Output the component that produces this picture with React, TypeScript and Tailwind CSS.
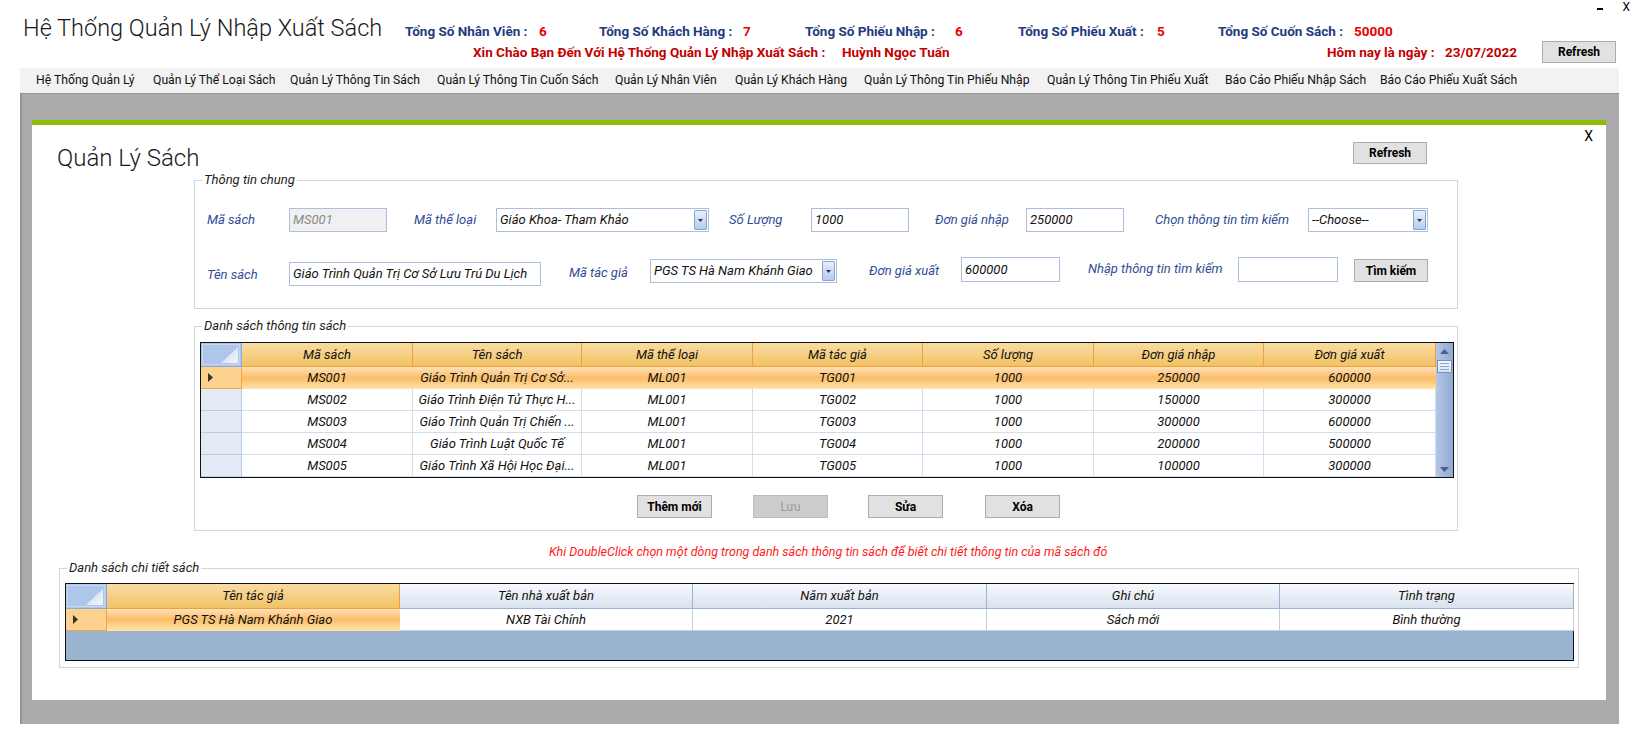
import React from 'react';

const stats = [
  { label: 'Tổng Số Nhân Viên :', value: '6', lw: 'w-[134px]', vw: 'w-[60px]' },
  { label: 'Tổng Số Khách Hàng :', value: '7', lw: 'w-[144px]', vw: 'w-[62px]' },
  { label: 'Tổng Số Phiếu Nhập :', value: '6', lw: 'w-[150px]', vw: 'w-[63px]' },
  { label: 'Tổng Số Phiếu Xuất :', value: '5', lw: 'w-[139px]', vw: 'w-[61px]' },
  { label: 'Tổng Số Cuốn Sách :', value: '50000', lw: 'w-[136px]', vw: 'w-[60px]' },
];

const menuItems = [
  { label: 'Hệ Thống Quản Lý', w: 'w-[117px]' },
  { label: 'Quản Lý Thể Loại Sách', w: 'w-[137px]' },
  { label: 'Quản Lý Thông Tin Sách', w: 'w-[147px]' },
  { label: 'Quản Lý Thông Tin Cuốn Sách', w: 'w-[178px]' },
  { label: 'Quản Lý Nhân Viên', w: 'w-[120px]' },
  { label: 'Quản Lý Khách Hàng', w: 'w-[129px]' },
  { label: 'Quản Lý Thông Tin Phiếu Nhập', w: 'w-[183px]' },
  { label: 'Quản Lý Thông Tin Phiếu Xuất', w: 'w-[178px]' },
  { label: 'Báo Cáo Phiếu Nhập Sách', w: 'w-[155px]' },
  { label: 'Báo Cáo Phiếu Xuất Sách', w: 'w-[140px]' },
];

// bảng sách
const bookCols = [
  { label: 'Mã sách', w: 'w-[171px]' },
  { label: 'Tên sách', w: 'w-[169px]' },
  { label: 'Mã thể loại', w: 'w-[171px]' },
  { label: 'Mã tác giả', w: 'w-[170px]' },
  { label: 'Số lượng', w: 'w-[171px]' },
  { label: 'Đơn giá nhập', w: 'w-[170px]' },
  { label: 'Đơn giá xuất', w: 'w-[172px]' },
];

const books = [
  ['MS001', 'Giáo Trình Quản Trị Cơ Sở...', 'ML001', 'TG001', '1000', '250000', '600000'],
  ['MS002', 'Giáo Trình Điện Tử Thực H...', 'ML001', 'TG002', '1000', '150000', '300000'],
  ['MS003', 'Giáo Trình Quản Trị Chiến ...', 'ML001', 'TG003', '1000', '300000', '600000'],
  ['MS004', 'Giáo Trình Luật Quốc Tế', 'ML001', 'TG004', '1000', '200000', '500000'],
  ['MS005', 'Giáo Trình Xã Hội Học Đại...', 'ML001', 'TG005', '1000', '100000', '300000'],
];

const detailCols = [
  { label: 'Tên tác giả', value: 'PGS TS Hà Nam Khánh Giao', w: 'w-[293px]' },
  { label: 'Tên nhà xuất bản', value: 'NXB Tài Chính', w: 'w-[293px]' },
  { label: 'Năm xuất bản', value: '2021', w: 'w-[294px]' },
  { label: 'Ghi chú', value: 'Sách mới', w: 'w-[293px]' },
  { label: 'Tình trạng', value: 'Bình thường', w: 'w-[294px]' },
];

const DropArrow = () => (
  <div className="flex h-full w-[13px] items-center justify-center rounded-[1px] border border-[#8aa4cc] bg-linear-to-b from-[#e6eefb] to-[#b4cbee]">
    <svg width="5" height="3" viewBox="0 0 5 3">
      <path d="M0 0h5L2.5 3z" fill="#27385a" />
    </svg>
  </div>
);

const TextBox = ({ value, w, h = 'h-[24px]', extra = '', disabled = false }: { value: string; w: string; h?: string; extra?: string; disabled?: boolean }) => (
  <div
    className={`${w} ${h} ${extra} flex shrink-0 items-center overflow-hidden border border-[#abc0dc] px-[3px] text-[13px] whitespace-nowrap italic ${
      disabled ? 'bg-[#f0f0f0] text-[#8a8a8a]' : 'bg-white text-[#111]'
    }`}
  >
    {value}
  </div>
);

const ComboBox = ({ value, w, extra = '' }: { value: string; w: string; extra?: string }) => (
  <div className={`${w} ${extra} flex h-[24px] shrink-0 items-center border border-[#abc0dc] bg-white py-[1px] pr-[1px] pl-[3px] text-[13px] italic`}>
    <span className="flex-1 overflow-hidden whitespace-nowrap text-[#111]">{value}</span>
    <DropArrow />
  </div>
);

const Label = ({ text, w, extra = '' }: { text: string; w: string; extra?: string }) => (
  <div className={`${w} ${extra} flex h-[24px] shrink-0 items-center text-[13px] whitespace-nowrap italic text-[#2f4c95]`}>{text}</div>
);

const Btn = ({ text, extra = '', disabled = false }: { text: string; extra?: string; disabled?: boolean }) => (
  <button
    className={`${extra} flex shrink-0 items-center justify-center border text-[12px] ${
      disabled ? 'border-[#bcbcbc] bg-[#cccccc] text-[#9c9c9c]' : 'border-[#adadad] bg-[#e1e1e1] font-bold text-black'
    }`}
  >
    {text}
  </button>
);

const CornerCell = () => (
  <div className="relative h-full w-[41px] shrink-0 border-r border-b border-[#8eaad6] bg-[#aec6ea]">
    <div className="m-[1px] h-[calc(100%-2px)] border border-[#c6d7f1]" />
    <svg className="absolute right-[3px] bottom-[3px]" width="17" height="16" viewBox="0 0 17 16">
      <defs>
        <linearGradient id="tri" x1="0" y1="0" x2="1" y2="1">
          <stop offset="0" stopColor="#c9d7ec" />
          <stop offset="1" stopColor="#f4f7fb" />
        </linearGradient>
      </defs>
      <path d="M17 0V16H0z" fill="url(#tri)" />
    </svg>
  </div>
);

const RowArrow = () => (
  <svg width="5" height="9" viewBox="0 0 5 9">
    <path d="M0 0L5 4.5L0 9z" fill="#333" />
  </svg>
);

const GroupBox = ({ title, extra, children }: { title: string; extra: string; children?: React.ReactNode }) => (
  <div className={`${extra} relative shrink-0 border border-[#d6d6d6]`}>
    <span className="absolute top-[-9px] left-[7px] bg-white px-[2px] text-[13px] leading-[16px] italic text-[#1c1c1c]">{title}</span>
    {children}
  </div>
);

export default function App() {
  return (
    <div className="h-[749px] w-[1639px] overflow-hidden bg-white font-['Roboto','Noto_Sans',sans-serif] text-black">
      {/* Tiêu đề và thống kê */}
      <div className="relative flex h-[68px]">
        <div className="w-[405px] shrink-0 pt-[14px] pl-[23px] text-[23.5px] leading-[28px] font-light whitespace-nowrap text-[#1a1a1a]">
          Hệ Thống Quản Lý Nhập Xuất Sách
        </div>
        <div className="flex flex-col">
          <div className="mt-[22px] flex h-[18px] items-center text-[13.5px] font-bold whitespace-nowrap">
            {stats.map(s => (
              <div key={s.label} className="flex">
                <span className={`${s.lw} text-[#1f3a80]`}>{s.label}</span>
                <span className={`${s.vw} text-[#e80000]`}>{s.value}</span>
              </div>
            ))}
          </div>
          <div className="flex h-[24px] items-center text-[13.5px] font-bold whitespace-nowrap text-[#c40000]">
            <span className="ml-[68px] w-[369px]">Xin Chào Bạn Đến Với Hệ Thống Quản Lý Nhập Xuất Sách :</span>
            <span className="w-[485px]">Huỳnh Ngọc Tuấn</span>
            <span className="w-[118px]">Hôm nay là ngày :</span>
            <span className="w-[97px]">23/07/2022</span>
            <Btn text="Refresh" extra="h-[22px] w-[74px]" />
          </div>
        </div>
        <div className="absolute top-0 right-[9px] flex items-start gap-[19px]">
          <div className="mt-[8px] h-[2px] w-[6px] bg-black" />
          <span className="text-[12px] leading-[14px]">X</span>
        </div>
      </div>

      {/* Menu */}
      <div className="ml-[20px] flex h-[25px] w-[1599px] items-center bg-[#f2f2f2] pl-[16px] text-[12.2px] whitespace-nowrap text-[#111]">
        {menuItems.map(m => (
          <span key={m.label} className={`${m.w} shrink-0`}>
            {m.label}
          </span>
        ))}
      </div>

      {/* Vùng làm việc */}
      <div className="ml-[20px] h-[631px] w-[1599px] border-t border-l-2 border-[#949494] bg-[#ababab] pt-[26px] pl-[10px]">
        <div className="flex h-[580px] w-[1574px] flex-col border-t-[5px] border-[#8cbd00] bg-white">
          <div className="relative flex h-[55px] shrink-0 items-start">
            <div className="flex-1 pt-[19px] pl-[25px] text-[24px] leading-[28px] font-light text-[#1a1a1a]">Quản Lý Sách</div>
            <Btn text="Refresh" extra="mt-[17px] mr-[179px] h-[22px] w-[74px]" />
            <span className="absolute top-[3px] right-[13px] text-[14px] leading-[16px]">X</span>
          </div>

          {/* Thông tin chung */}
          <GroupBox title="Thông tin chung" extra="ml-[162px] h-[129px] w-[1264px] flex flex-col pt-[27px]">
            <div className="flex h-[24px]">
              <Label text="Mã sách" w="w-[82px]" extra="ml-[12px]" />
              <TextBox value="MS001" w="w-[98px]" disabled />
              <Label text="Mã thể loại" w="w-[82px]" extra="ml-[27px]" />
              <ComboBox value="Giáo Khoa- Tham Khảo" w="w-[213px]" />
              <Label text="Số Lượng" w="w-[82px]" extra="ml-[20px]" />
              <TextBox value="1000" w="w-[98px]" />
              <Label text="Đơn giá nhập" w="w-[91px]" extra="ml-[26px]" />
              <TextBox value="250000" w="w-[98px]" />
              <Label text="Chọn thông tin tìm kiếm" w="w-[153px]" extra="ml-[31px]" />
              <ComboBox value="--Choose--" w="w-[120px]" />
            </div>
            <div className="mt-[25px] flex items-start">
              <Label text="Tên sách" w="w-[82px]" extra="ml-[12px] mt-[6px]" />
              <TextBox value="Giáo Trình Quản Trị Cơ Sở Lưu Trú Du Lịch" w="w-[252px]" extra="mt-[5px]" />
              <Label text="Mã tác giả" w="w-[81px]" extra="ml-[28px] mt-[4px]" />
              <ComboBox value="PGS TS Hà Nam Khánh Giao" w="w-[187px]" extra="mt-[2px]" />
              <Label text="Đơn giá xuất" w="w-[92px]" extra="ml-[32px] mt-[2px]" />
              <TextBox value="600000" w="w-[99px]" h="h-[25px]" />
              <Label text="Nhập thông tin tìm kiếm" w="w-[150px]" extra="ml-[28px]" />
              <TextBox value="" w="w-[100px]" h="h-[25px]" />
              <Btn text="Tìm kiếm" extra="ml-[16px] mt-[2px] h-[23px] w-[74px]" />
            </div>
          </GroupBox>

          {/* Danh sách thông tin sách */}
          <GroupBox title="Danh sách thông tin sách" extra="mt-[17px] ml-[162px] h-[205px] w-[1264px] flex flex-col">
            <div className="mt-[15px] ml-[5px] flex h-[136px] w-[1254px] border border-[#111] text-[13px] italic text-[#111]">
              <div className="flex w-[1235px] flex-col">
                <div className="flex h-[24px]">
                  <CornerCell />
                  {bookCols.map(c => (
                    <div
                      key={c.label}
                      className={`${c.w} flex h-full shrink-0 items-center justify-center border-r border-b border-[#f0a03c] bg-linear-to-b from-[#f9dca2] to-[#f1c264]`}
                    >
                      {c.label}
                    </div>
                  ))}
                </div>
                {books.map((r, i) => (
                  <div key={r[0]} className={`flex h-[22px] ${i === 0 ? 'bg-linear-to-b from-[#fee1b8] via-[#fbbd66] to-[#fee2a8]' : 'bg-white'}`}>
                    <div
                      className={`flex h-full w-[41px] shrink-0 items-center border-r border-b pl-[7px] ${
                        i === 0 ? 'border-[#f2a447] bg-[#fcd28e]' : 'border-[#bccce3] bg-[#e3ebf6]'
                      }`}
                    >
                      {i === 0 && <RowArrow />}
                    </div>
                    {r.map((v, j) => (
                      <div
                        key={j}
                        className={`${bookCols[j].w} flex h-full shrink-0 items-center justify-center overflow-hidden border-r border-b whitespace-nowrap ${
                          i === 0 ? 'border-transparent' : 'border-[#d3ddec]'
                        }`}
                      >
                        {v}
                      </div>
                    ))}
                  </div>
                ))}
              </div>
              {/* thanh cuộn */}
              <div className="flex w-[17px] flex-col items-center bg-linear-to-r from-[#b4c8e6] to-[#8fa9d1]">
                <svg className="mt-[6px]" width="9" height="5" viewBox="0 0 9 5">
                  <path d="M0 5L4.5 0L9 5z" fill="#4a5f86" />
                </svg>
                <div className="mt-[6px] flex h-[13px] w-[15px] flex-col items-center justify-center gap-[2px] border border-[#7590bd] bg-linear-to-b from-[#f2f6fc] to-[#d8e3f3]">
                  <div className="h-px w-[9px] bg-[#8ea4c8]" />
                  <div className="h-px w-[9px] bg-[#8ea4c8]" />
                  <div className="h-px w-[9px] bg-[#8ea4c8]" />
                </div>
                <svg className="mt-auto mb-[5px]" width="9" height="5" viewBox="0 0 9 5">
                  <path d="M0 0L9 0L4.5 5z" fill="#4a5f86" />
                </svg>
              </div>
            </div>
            <div className="mt-[17px] flex">
              <Btn text="Thêm mới" extra="ml-[442px] h-[23px] w-[75px]" />
              <Btn text="Lưu" extra="ml-[41px] h-[23px] w-[75px]" disabled />
              <Btn text="Sửa" extra="ml-[40px] h-[23px] w-[75px]" />
              <Btn text="Xóa" extra="ml-[42px] h-[23px] w-[75px]" />
            </div>
          </GroupBox>

          <div className="mt-[13px] h-[16px] pl-[517px] text-[12.5px] leading-[16px] whitespace-nowrap italic text-[#ff1a1a]">
            Khi DoubleClick chọn một dòng trong danh sách thông tin sách để biết chi tiết thông tin của mã sách đó
          </div>

          {/* Danh sách chi tiết sách */}
          <GroupBox title="Danh sách chi tiết sách" extra="mt-[8px] ml-[27px] h-[100px] w-[1520px] flex flex-col">
            <div className="mt-[14px] ml-[5px] flex h-[78px] w-[1509px] flex-col border border-[#111] bg-[#99b4d1] text-[13px] italic text-[#111]">
              <div className="flex h-[25px] shrink-0">
                <CornerCell />
                {detailCols.map((c, j) => (
                  <div
                    key={c.label}
                    className={`${c.w} flex h-full shrink-0 items-center justify-center border-r border-b ${
                      j === 0
                        ? 'border-[#f0a03c] bg-linear-to-b from-[#f9dca2] to-[#f1c264]'
                        : 'border-[#9cb4d3] bg-linear-to-b from-[#f8fafd] to-[#d9e2ee]'
                    }`}
                  >
                    {c.label}
                  </div>
                ))}
              </div>
              <div className="flex h-[22px] shrink-0 bg-white">
                <div className="flex h-full w-[41px] shrink-0 items-center border-r border-b border-[#f2a447] bg-[#fcd28e] pl-[7px]">
                  <RowArrow />
                </div>
                {detailCols.map((c, j) => (
                  <div
                    key={c.label}
                    className={`${c.w} flex h-full shrink-0 items-center justify-center border-r border-b ${
                      j === 0 ? 'border-transparent bg-linear-to-b from-[#fee1b8] via-[#fbbd66] to-[#fee2a8]' : 'border-[#c3cfdf] bg-white'
                    }`}
                  >
                    {c.value}
                  </div>
                ))}
              </div>
            </div>
          </GroupBox>
        </div>
      </div>
    </div>
  );
}
